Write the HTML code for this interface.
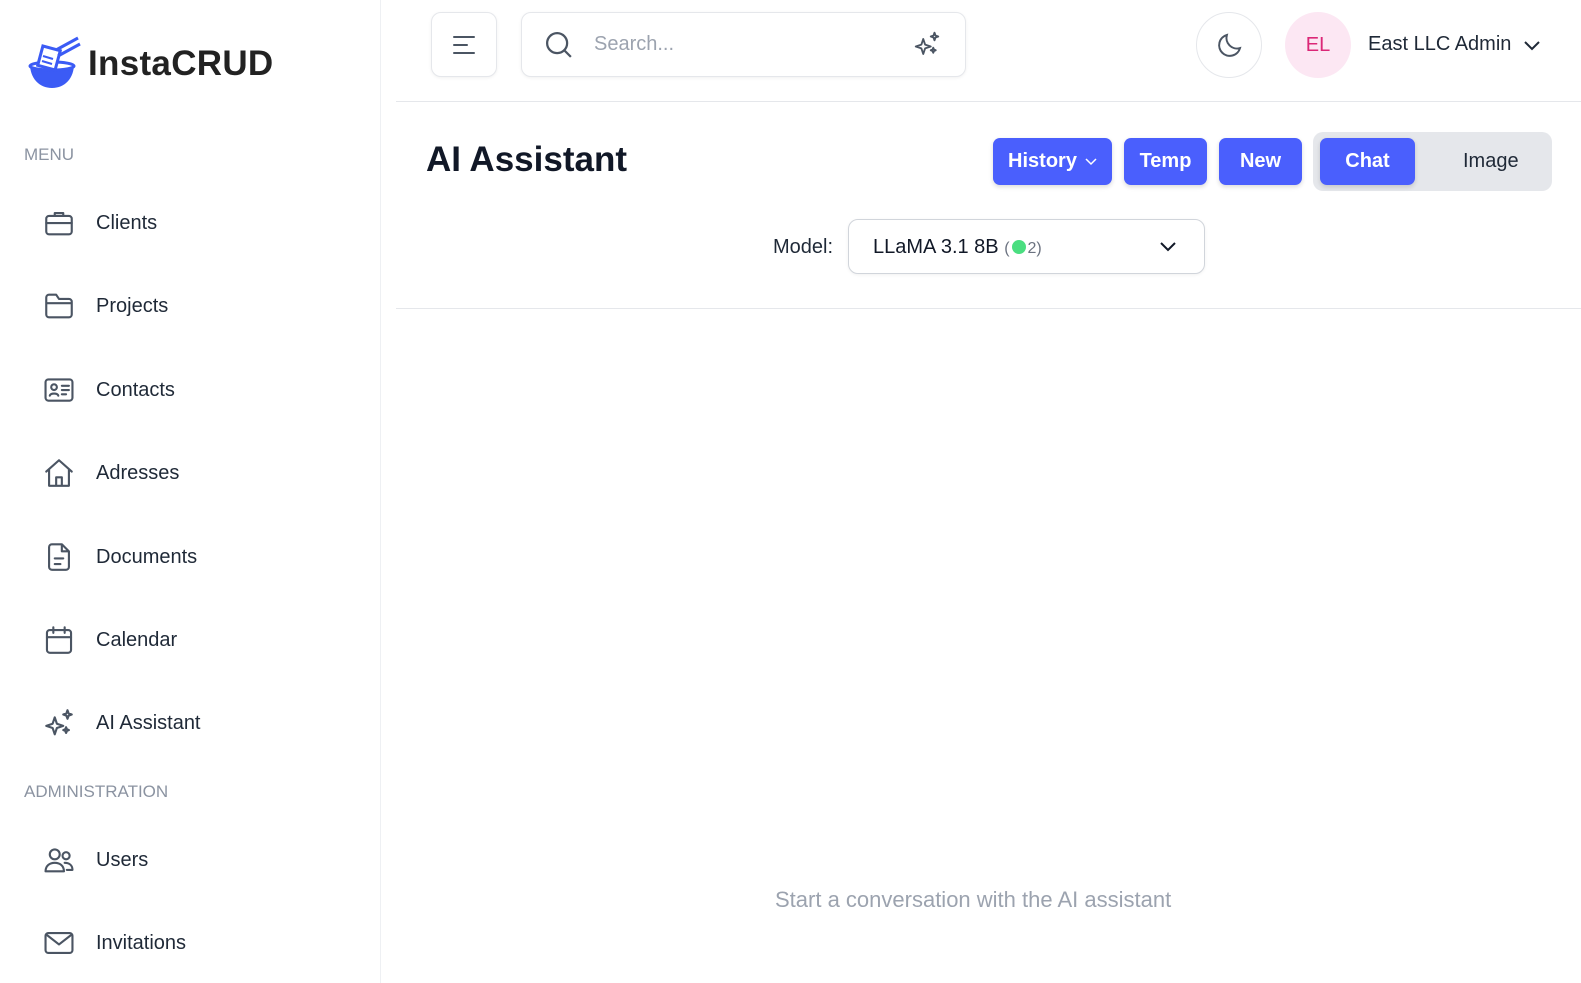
<!DOCTYPE html>
<html><head><meta charset="utf-8"><style>
*{box-sizing:border-box;margin:0;padding:0}
body{width:1581px;height:983px;overflow:hidden;background:#fff;font-family:"Liberation Sans",sans-serif;color:#1f2937;position:relative}
.side{position:absolute;left:0;top:0;width:381px;height:983px;border-right:1px solid #eef0f3;background:#fff}
.logo{position:absolute;left:28px;top:36px;display:flex;align-items:center}
.logo span{font-size:35px;font-weight:bold;color:#222;margin-left:6px;letter-spacing:0.3px}
.sec{position:absolute;left:24px;font-size:17px;color:#8b93a1}
.item{position:absolute;left:42px;display:flex;align-items:center;font-size:20px;color:#1f2937}
.item svg{width:34px;height:34px;margin-right:20px;fill:none;stroke:#4b5563;stroke-width:1.5;stroke-linecap:round;stroke-linejoin:round}
.box{position:absolute;border:1px solid #e5e7eb;border-radius:10px;background:#fff;box-shadow:0 1px 3px rgba(0,0,0,.06)}
.btn{position:absolute;top:138px;height:47px;background:#4a5ffd;color:#fff;border-radius:7px;font-size:20px;font-weight:bold;display:flex;align-items:center;justify-content:center;box-shadow:0 2px 5px rgba(0,0,0,.15)}
</style></head><body>
<div class="side">
 <div class="logo">
  <svg width="54" height="56" viewBox="0 0 54 56"><path d="M2 28h44c0 14-9 24-22 24S2 42 2 28z" fill="#3b5bf5"/><ellipse cx="24" cy="30" rx="22" ry="4" fill="#fff" stroke="#3b5bf5" stroke-width="3"/><rect x="12" y="12" width="18" height="20" fill="#fff" stroke="#3b5bf5" stroke-width="3" transform="rotate(15 21 22)"/><path d="M28 14L50 2M30 20L52 8" stroke="#3b5bf5" stroke-width="3"/><path d="M15 20l10 3M14 25l10 3" stroke="#3b5bf5" stroke-width="2"/></svg>
  <span>InstaCRUD</span>
 </div>
 <div class="sec" style="top:145px">MENU</div>
 <div class="item" style="top:206px"><svg viewBox="0 0 24 24"><rect x="3" y="7" width="18" height="13" rx="2"/><path d="M9 7V5h6v2M3 12h18"/></svg>Clients</div>
 <div class="item" style="top:289px"><svg viewBox="0 0 24 24"><path d="M3 7v11a2 2 0 002 2h14a2 2 0 002-2V9a2 2 0 00-2-2h-7l-2-3H5a2 2 0 00-2 2zM3 10h18"/></svg>Projects</div>
 <div class="item" style="top:373px"><svg viewBox="0 0 24 24"><rect x="2.5" y="4.5" width="19" height="15" rx="2"/><circle cx="8.5" cy="10" r="2"/><path d="M5.5 16c.5-2 5.5-2 6 0M14 9h5M14 12h5M14 15h3"/></svg>Contacts</div>
 <div class="item" style="top:456px"><svg viewBox="0 0 24 24"><path d="M3 11l9-8 9 8M5 9.5V21h14V9.5M10 21v-6h4v6"/></svg>Adresses</div>
 <div class="item" style="top:540px"><svg viewBox="0 0 24 24"><path d="M14 3H7a2 2 0 00-2 2v14a2 2 0 002 2h10a2 2 0 002-2V8zM14 3v5h5M9 13h6M9 17h4"/></svg>Documents</div>
 <div class="item" style="top:623px"><svg viewBox="0 0 24 24"><rect x="3.5" y="5" width="17" height="16" rx="2"/><path d="M8 3v4M16 3v4M3.5 10h17"/></svg>Calendar</div>
 <div class="item" style="top:706px"><svg viewBox="0 0 24 24"><path d="M9 8l1.5 4.5L15 14l-4.5 1.5L9 20l-1.5-4.5L3 14l4.5-1.5zM18 3l.8 2.2L21 6l-2.2.8L18 9l-.8-2.2L15 6l2.2-.8zM17 15l.6 1.4 1.4.6-1.4.6L17 19l-.6-1.4L15 17l1.4-.6z"/></svg>AI Assistant</div>
 <div class="sec" style="top:782px">ADMINISTRATION</div>
 <div class="item" style="top:843px"><svg viewBox="0 0 24 24"><circle cx="9" cy="8" r="3.5"/><path d="M2.5 20c0-4 3-6 6.5-6s6.5 2 6.5 6z"/><circle cx="17" cy="9" r="2.5"/><path d="M16 14c3 0 5.5 1.5 5.5 5h-4"/></svg>Users</div>
 <div class="item" style="top:926px"><svg viewBox="0 0 24 24"><rect x="2.5" y="5" width="19" height="14" rx="2"/><path d="M3 6l9 7 9-7"/></svg>Invitations</div>
</div>
<div class="box" style="left:431px;top:12px;width:66px;height:65px"><svg style="position:absolute;left:20px;top:21px" width="24" height="22" viewBox="0 0 24 22" stroke="#4b5563" stroke-width="2" stroke-linecap="round"><path d="M2 3h20M2 11h13M2 19h20"/></svg></div>
<div class="box" style="left:521px;top:12px;width:445px;height:65px">
 <svg style="position:absolute;left:22px;top:17px" width="30" height="30" viewBox="0 0 24 24" fill="none" stroke="#4b5563" stroke-width="1.8"><circle cx="10.5" cy="10.5" r="8"/><path d="M16.5 16.5l5 5"/></svg>
 <span style="position:absolute;left:72px;top:20px;font-size:20px;color:#9ca3af">Search...</span>
 <svg style="position:absolute;left:390px;top:16px" width="30" height="30" viewBox="0 0 24 24" fill="none" stroke="#4b5563" stroke-width="1.5" stroke-linejoin="round"><path d="M9 8l1.5 4.5L15 14l-4.5 1.5L9 20l-1.5-4.5L3 14l4.5-1.5zM18 3l.8 2.2L21 6l-2.2.8L18 9l-.8-2.2L15 6l2.2-.8zM17 15l.6 1.4 1.4.6-1.4.6L17 19l-.6-1.4L15 17l1.4-.6z"/></svg>
</div>
<div style="position:absolute;left:1196px;top:12px;width:66px;height:66px;border:1px solid #e5e7eb;border-radius:50%"><svg style="position:absolute;left:18px;top:17px" width="30" height="30" viewBox="0 0 24 24" fill="none" stroke="#4b5563" stroke-width="1.6"><path d="M20 14.5A8.5 8.5 0 019.5 4 8.5 8.5 0 1020 14.5z"/></svg></div>
<div style="position:absolute;left:1285px;top:12px;width:66px;height:66px;border-radius:50%;background:#fce7f3;color:#db2777;font-size:20px;display:flex;align-items:center;justify-content:center">EL</div>
<div style="position:absolute;left:1368px;top:33px;font-size:20px;color:#1f2937">East LLC Admin</div>
<svg style="position:absolute;left:1523px;top:38px" width="18" height="14" viewBox="0 0 18 14" fill="none" stroke="#1f2937" stroke-width="2"><path d="M2 4l7 7 7-7"/></svg>
<div style="position:absolute;left:396px;top:101px;width:1185px;border-top:1px solid #e5e7eb"></div>
<div style="position:absolute;left:426px;top:140px;font-size:35px;font-weight:bold;color:#111827">AI Assistant</div>
<div class="btn" style="left:993px;width:119px">History <svg style="margin-left:8px" width="12" height="8" viewBox="0 0 12 8" fill="none" stroke="#fff" stroke-width="1.5"><path d="M1 1l5 5 5-5"/></svg></div>
<div class="btn" style="left:1124px;width:83px">Temp</div>
<div class="btn" style="left:1219px;width:83px">New</div>
<div style="position:absolute;left:1313px;top:132px;width:239px;height:59px;background:#e5e7eb;border-radius:10px"></div>
<div class="btn" style="left:1320px;width:95px">Chat</div>
<div style="position:absolute;left:1463px;top:150px;font-size:20px;color:#1f2937">Image</div>
<div style="position:absolute;left:773px;top:236px;font-size:20px;color:#1f2937">Model:</div>
<div class="box" style="left:848px;top:219px;width:357px;height:55px;border-color:#d1d5db">
 <span style="position:absolute;left:24px;top:16px;font-size:20px;color:#111827">LLaMA 3.1 8B <span style="font-size:16px;color:#6b7280">(<span style="display:inline-block;width:14px;height:14px;border-radius:50%;background:#4ade80;vertical-align:-1px;margin:0 2px"></span>2)</span></span>
 <svg style="position:absolute;left:310px;top:20px" width="18" height="14" viewBox="0 0 18 14" fill="none" stroke="#111827" stroke-width="2"><path d="M2 3l7 7 7-7"/></svg>
</div>
<div style="position:absolute;left:396px;top:308px;width:1185px;border-top:1px solid #e5e7eb"></div>
<div style="position:absolute;left:775px;top:887px;font-size:22px;color:#9ca3af">Start a conversation with the AI assistant</div>
</body></html>
